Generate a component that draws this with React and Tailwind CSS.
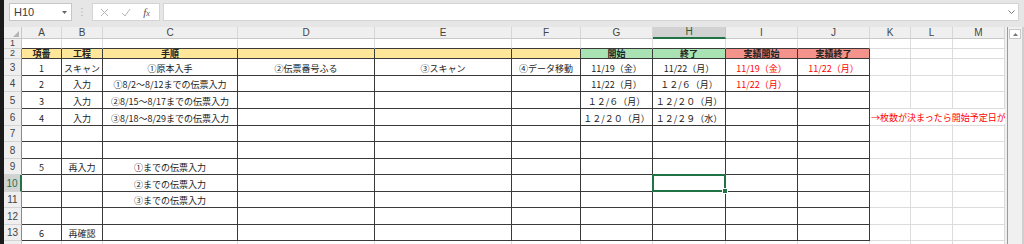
import React from 'react';

const COLS = [
  { k: 'A', w: 'w-[40px]' },
  { k: 'B', w: 'w-[41px]' },
  { k: 'C', w: 'w-[135px]' },
  { k: 'D', w: 'w-[137px]' },
  { k: 'E', w: 'w-[137px]' },
  { k: 'F', w: 'w-[69px]' },
  { k: 'G', w: 'w-[72px]' },
  { k: 'H', w: 'w-[73px]' },
  { k: 'I', w: 'w-[72px]' },
  { k: 'J', w: 'w-[72px]' },
  { k: 'K', w: 'w-[41px]' },
  { k: 'L', w: 'w-[42px]' },
  { k: 'M', w: 'w-[52px]' },
];

const ROWS = [
  { n: 1, h: 'h-[10px]' },
  { n: 2, h: 'h-[10px]' },
  { n: 3, h: 'h-[17px]' },
  { n: 4, h: 'h-[16px]' },
  { n: 5, h: 'h-[17px]' },
  { n: 6, h: 'h-[17px]' },
  { n: 7, h: 'h-[16px]' },
  { n: 8, h: 'h-[17px]' },
  { n: 9, h: 'h-[16px]' },
  { n: 10, h: 'h-[17px]' },
  { n: 11, h: 'h-[16px]' },
  { n: 12, h: 'h-[17px]' },
  { n: 13, h: 'h-[16px]' },
  { n: 14, h: 'h-[17px]' },
];

const DATA = {
  2: { A: '項番', B: '工程', C: '手順', G: '開始', H: '終了', I: '実績開始', J: '実績終了' },
  3: {
    A: '1',
    B: 'スキャン',
    C: '①原本入手',
    D: '②伝票番号ふる',
    E: '③スキャン',
    F: '④データ移動',
    G: '11/19（金）',
    H: '11/22（月）',
    I: '11/19（金）',
    J: '11/22（月）',
  },
  4: { A: '2', B: '入力', C: '①8/2～8/12までの伝票入力', G: '11/22（月）', H: '１２/６（月）', I: '11/22（月）' },
  5: { A: '3', B: '入力', C: '②8/15～8/17までの伝票入力', G: '１２/６（月）', H: '１２/２０（月）' },
  6: { A: '4', B: '入力', C: '③8/18～8/29までの伝票入力', G: '１２/２０（月）', H: '１２/２９（水）' },
  9: { A: '5', B: '再入力', C: '①までの伝票入力' },
  10: { C: '②までの伝票入力' },
  11: { C: '③までの伝票入力' },
  13: { A: '6', B: '再確認' },
};

const RED = new Set(['I3', 'J3', 'I4']);
const TABLE_COLS = 'ABCDEFGHIJ';

function headerFill(k) {
  if ('ABCDEF'.includes(k)) return 'bg-[#ffe699]';
  if ('GH'.includes(k)) return 'bg-[#a9e2b3]';
  return 'bg-[#f4938b]';
}

function Cell({ col, row }) {
  const inCols = TABLE_COLS.includes(col.k);
  const inTable = inCols && row.n >= 2 && row.n <= 13;
  const bottomDark = inTable || (inCols && row.n === 1);
  const text = DATA[row.n] && DATA[row.n][col.k];
  const id = col.k + row.n;
  const isHeader = row.n === 2 && inCols;
  const selected = id === 'H10';
  return (
    <div
      className={[
        'relative shrink-0 flex justify-center border-r border-b whitespace-nowrap leading-none',
        col.w,
        inTable ? 'border-r-[#3a3a3a]' : 'border-r-[#dcdcdc]',
        bottomDark ? 'border-b-[#3a3a3a]' : 'border-b-[#dcdcdc]',
        isHeader ? headerFill(col.k) + ' items-center font-bold text-[9px]' : 'items-center pt-[2px] text-[9px]',
        RED.has(id) ? 'text-[#ff0000]' : 'text-[#222222]',
      ].join(' ')}
    >
      {text}
      {id === 'K6' && (
        <span className="absolute left-[1px] top-0 bottom-[1px] z-10 flex items-center pt-[2px] bg-white text-[#ff0000] text-[9px] whitespace-nowrap">
          →枚数が決まったら開始予定日が
        </span>
      )}
      {selected && (
        <div className="absolute -left-[1px] -top-[1px] w-[74px] h-[18px] border-2 border-[#217346] z-20">
          <div className="absolute -right-[4px] -bottom-[4px] w-[6px] h-[6px] bg-[#217346] border border-white" />
        </div>
      )}
    </div>
  );
}

function RowHeader({ row }) {
  const sel = row.n === 10;
  const dark = row.n >= 2 && row.n <= 13;
  const small = row.n <= 2;
  return (
    <div
      className={[
        'w-[18px] shrink-0 flex justify-center border-b border-b-[#d4d4d4] leading-none font-["Liberation_Sans",sans-serif]',
        small ? 'items-center text-[9px]' : 'items-end pb-[2px] text-[10px]',
        row.h,
        sel
          ? 'bg-[#d2d2d2] text-[#217346] border-r-2 border-r-[#217346]'
          : dark
          ? 'bg-[#efefef] text-[#444444] border-r border-r-[#8a8a8a]'
          : 'bg-[#efefef] text-[#444444] border-r border-r-[#c8c8c8]',
      ].join(' ')}
    >
      {row.n}
    </div>
  );
}

function ColumnHeaders() {
  return (
    <div className="flex h-[12px] shrink-0">
      <div className="w-[18px] shrink-0 relative bg-[#efefef] border-r border-b border-[#c8c8c8]">
        <svg className="absolute right-[2px] bottom-[1px]" width="6" height="6" viewBox="0 0 6 6">
          <polygon points="6,0 6,6 0,6" fill="#b4b4b4" />
        </svg>
      </div>
      {COLS.map((c) => {
        const sel = c.k === 'H';
        return (
          <div
            key={c.k}
            className={[
              'shrink-0 flex items-center justify-center text-[10px] leading-none font-["Liberation_Sans",sans-serif] border-r',
              c.w,
              sel
                ? 'bg-[#d2d2d2] text-[#1e5e38] border-b-2 border-b-[#217346] border-r-[#c8c8c8]'
                : 'bg-[#efefef] text-[#444444] border-b border-b-[#c8c8c8] border-r-[#d6d6d6]',
            ].join(' ')}
          >
            {c.k}
          </div>
        );
      })}
    </div>
  );
}

function TopBar() {
  return (
    <div className="h-[27px] shrink-0 flex items-start pt-[3px] bg-[#e6e6e6]">
      <div className="ml-[5px] w-[63px] h-[18px] bg-white border border-[#c6c6c6] flex items-center justify-between pl-[4px] pr-[4px]">
        <span className="text-[11px] leading-none text-[#3c3c3c] font-['Liberation_Sans',sans-serif]">H10</span>
        <svg width="5" height="3" viewBox="0 0 5 3">
          <polygon points="0,0 5,0 2.5,3" fill="#666666" />
        </svg>
      </div>
      <div className="w-[20px] h-[18px] flex items-center justify-center">
        <svg width="2" height="8" viewBox="0 0 2 8">
          <rect x="0.5" y="0" width="1" height="1" fill="#a0a0a0" />
          <rect x="0.5" y="3.5" width="1" height="1" fill="#a0a0a0" />
          <rect x="0.5" y="7" width="1" height="1" fill="#a0a0a0" />
        </svg>
      </div>
      <div className="w-[68px] h-[18px] bg-white border border-[#d4d4d4] flex items-center pl-[1px]">
        <div className="w-[21px] flex justify-center">
          <svg width="9" height="9" viewBox="0 0 9 9">
            <path d="M1 1 L8 8 M8 1 L1 8" stroke="#b5b5b5" strokeWidth="1" fill="none" />
          </svg>
        </div>
        <div className="w-[21px] flex justify-center">
          <svg width="10" height="9" viewBox="0 0 10 9">
            <path d="M1 5 L4 8 L9 1" stroke="#b5b5b5" strokeWidth="1" fill="none" />
          </svg>
        </div>
        <div className="w-[21px] flex justify-center items-end">
          <span className="italic text-[11px] leading-none text-[#555555] font-['Liberation_Serif',serif]">
            f<span className="text-[8px]">x</span>
          </span>
        </div>
      </div>
      <div className="ml-[3px] flex-1 mr-[5px] h-[18px] bg-white border border-[#d4d4d4] flex items-center justify-end pr-[3px]">
        <svg width="7" height="4" viewBox="0 0 7 4">
          <path d="M0.5 0.5 L3.5 3.5 L6.5 0.5" stroke="#777777" strokeWidth="1" fill="none" />
        </svg>
      </div>
    </div>
  );
}

function Scrollbar() {
  return (
    <div className="w-[19px] shrink-0 flex bg-[#e8e8e8]">
      <div className="w-[2px] bg-[#f0f0f0]" />
      <div className="w-[1px] bg-[#9a9a9a]" />
      <div className="flex-1 bg-[#f0f0f0] flex flex-col items-center pt-[2px]">
        <div className="w-[12px] h-[10px] bg-white border border-[#c8c8c8] flex items-center justify-center">
          <svg width="5" height="3" viewBox="0 0 5 3">
            <polygon points="0,3 5,3 2.5,0" fill="#777777" />
          </svg>
        </div>
      </div>
      <div className="w-[2px] bg-[#d0d0d0]" />
    </div>
  );
}

export default function App() {
  return (
    <div className="w-[1024px] h-[244px] overflow-hidden flex bg-[#e6e6e6] font-['Noto_Sans_CJK_JP',sans-serif]">
      <div className="w-[4px] shrink-0 bg-[#1a1a1a]" />
      <div className="flex-1 flex flex-col min-w-0">
        <TopBar />
        <div className="flex flex-1 min-h-0">
          <div className="w-[1001px] shrink-0 flex flex-col overflow-hidden bg-white">
            <ColumnHeaders />
            {ROWS.map((r) => (
              <div key={r.n} className={'flex shrink-0 ' + r.h}>
                <RowHeader row={r} />
                {COLS.map((c) => (
                  <Cell key={c.k} col={c} row={r} />
                ))}
              </div>
            ))}
          </div>
          <Scrollbar />
        </div>
      </div>
    </div>
  );
}
